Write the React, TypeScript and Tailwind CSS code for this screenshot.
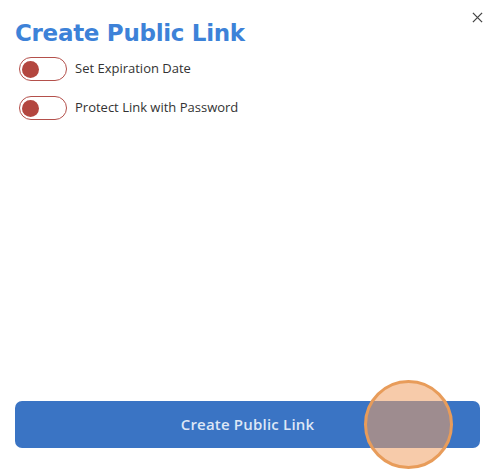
import React from "react";

const Toggle = () => (
  <div className="w-[48px] h-[24px] rounded-full border-[1.5px] border-[#b4504b] flex items-center px-[2px] shrink-0">
    <div className="w-[17px] h-[17px] rounded-full bg-[#b3463f]" />
  </div>
);

export default function App() {
  const options = ["Set Expiration Date", "Protect Link with Password"];
  return (
    <div className="w-[500px] h-[474px] bg-white relative font-['Open_Sans',sans-serif] flex flex-col">
      <button className="absolute right-[16px] top-[10px] w-[14px] h-[14px] flex items-center justify-center text-[#444]">
        <svg viewBox="0 0 12 12" width="11" height="11" stroke="currentColor" strokeWidth="1.4" fill="none">
          <path d="M1 1l10 10M11 1L1 11" />
        </svg>
      </button>
      <div className="px-[15px] pt-[18px] flex-1">
        <h1 className="text-[23px] leading-[30px] font-bold text-[#3d82d8] font-['DejaVu_Sans',sans-serif] tracking-[-0.3px]">
          Create Public Link
        </h1>
        <div className="mt-[9px] pl-[4px] flex flex-col gap-[15px]">
          {options.map((o) => (
            <div key={o} className="flex items-center gap-[8px]">
              <Toggle />
              <span className="text-[13px] text-[#333]">{o}</span>
            </div>
          ))}
        </div>
      </div>
      <div className="pl-[15px] pr-[20px] pb-[26px] relative">
        <button className="w-full h-[47px] rounded-[7px] bg-[#3a74c4] text-[#dde7f6] text-[15px] font-semibold tracking-[0.2px]">
          Create Public Link
        </button>
        <div className="absolute left-[364px] top-[-21px] w-[89px] h-[89px] rounded-full border-[3px] border-[#e89c5a] bg-[rgba(240,160,100,0.55)] pointer-events-none" />
      </div>
    </div>
  );
}
